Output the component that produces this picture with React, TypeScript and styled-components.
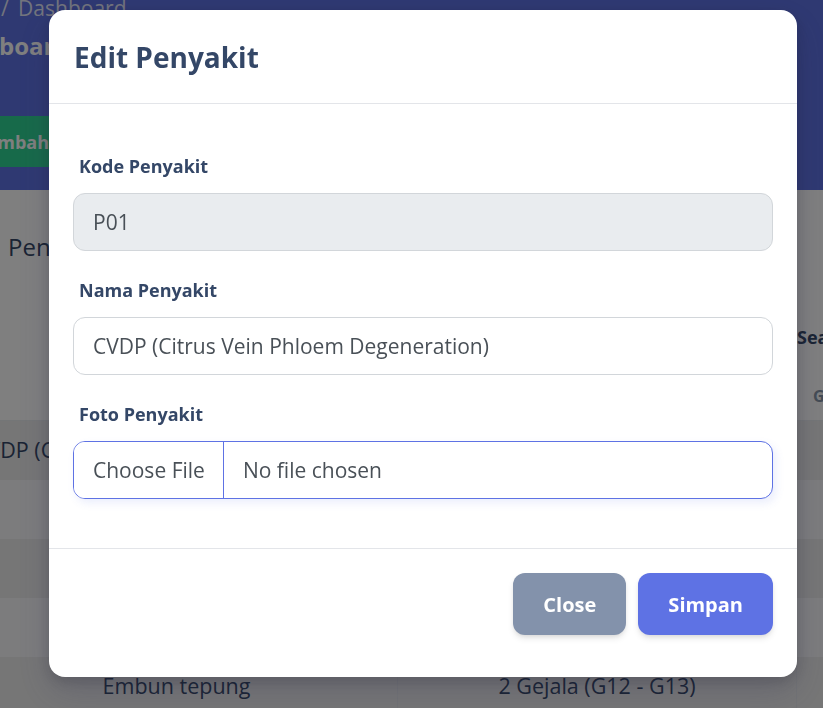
import React from "react";
import styled, { createGlobalStyle } from "styled-components";

const GlobalStyle = createGlobalStyle`
  html, body { margin: 0; padding: 0; }
  body {
    width: 823px;
    height: 708px;
    overflow: hidden;
    font-family: "Open Sans", "Noto Sans", sans-serif;
    background: #f8f9fe;
  }
  * { box-sizing: border-box; }
`;

/* ---------- background dashboard ---------- */

const Page = styled.div`
  width: 823px;
  height: 708px;
  overflow: hidden;
  background: #ffffff;
`;

const Header = styled.header`
  height: 190px;
  background: #5e72e4;
  display: flex;
  flex-direction: column;
  align-items: flex-start;
`;

const Breadcrumb = styled.div`
  margin: -6px 0 0 -66px;
  font-size: 21px;
  line-height: 28px;
  color: rgba(255, 255, 255, 0.85);
  white-space: nowrap;
  word-spacing: 4px;
`;

const PageTitle = styled.h1`
  margin: 8px 0 0 -61px;
  font-size: 24px;
  line-height: 32px;
  font-weight: 700;
  color: #ffffff;
  white-space: nowrap;
`;

const AddButton = styled.button`
  margin: 54px 0 0 -44px;
  height: 51px;
  padding: 0 20px;
  border: none;
  border-radius: 8px;
  background: #2fd494;
  color: #ffffff;
  font-family: inherit;
  font-size: 18px;
  font-weight: 700;
  white-space: nowrap;
`;

const Content = styled.section`
  padding-top: 42px;
`;

const CardTitle = styled.h3`
  margin: 0 0 0 8px;
  font-size: 24px;
  line-height: 30px;
  font-weight: 400;
  color: #344767;
`;

const SearchRow = styled.div`
  margin-top: 62px;
  padding-left: 797px;
  font-size: 18px;
  line-height: 26px;
  font-weight: 700;
  color: #344767;
  white-space: nowrap;
`;

const Table = styled.div`
  margin-top: 22px;
  margin-left: -44px;
  display: grid;
  grid-template-columns: 442px 399px 300px;
`;

const HeadCell = styled.div<{ $align?: string }>`
  height: 49px;
  display: flex;
  align-items: center;
  justify-content: ${(p) => p.$align || "center"};
  padding-left: 16px;
  font-size: 16px;
  font-weight: 700;
  color: #8898aa;
  border-bottom: 1px solid #e9ecef;
`;

const Cell = styled.div<{ $striped: boolean }>`
  height: 59px;
  display: flex;
  align-items: center;
  justify-content: center;
  padding-bottom: 2px;
  font-size: 21.5px;
  color: #344767;
  white-space: nowrap;
  background: ${(p) => (p.$striped ? "#ececec" : "#f8f9fa")};
  border-right: 1px solid #e4e6ea;
`;

/* ---------- modal ---------- */

const Overlay = styled.div`
  position: fixed;
  inset: 0;
  background: rgba(0, 0, 0, 0.5);
  display: flex;
  align-items: flex-start;
  padding: 10px 0 0 49px;
`;

const Modal = styled.div`
  width: 748px;
  background: #ffffff;
  border-radius: 16px;
  box-shadow: 0 15px 35px rgba(50, 50, 93, 0.2), 0 5px 15px rgba(0, 0, 0, 0.17);
  display: flex;
  flex-direction: column;
`;

const ModalHeader = styled.div`
  height: 94px;
  padding: 0 25px;
  display: flex;
  align-items: center;
  border-bottom: 1px solid #e3e5e9;
`;

const ModalTitle = styled.h5`
  margin: 0;
  font-size: 28px;
  line-height: 36px;
  font-weight: 700;
  color: #344767;
`;

const ModalBody = styled.div`
  padding: 50px 24px 49px;
  display: flex;
  flex-direction: column;
  gap: 27px;
`;

const FormGroup = styled.div`
  display: flex;
  flex-direction: column;
`;

const Label = styled.label`
  margin: 0 0 15px 6px;
  font-size: 18px;
  line-height: 24px;
  font-weight: 700;
  color: #344767;
`;

const TextInput = styled.input<{ $disabled?: boolean }>`
  height: 58px;
  width: 100%;
  padding: 0 19px;
  border: 1px solid #d2d6da;
  border-radius: 12px;
  background: ${(p) => (p.$disabled ? "#e9ecef" : "#ffffff")};
  font-family: inherit;
  font-size: 21px;
  color: #495057;
  outline: none;
`;

const FileInput = styled.input`
  height: 58px;
  width: 100%;
  padding: 0;
  border: 1px solid #5e72e4;
  border-radius: 12px;
  background: #ffffff;
  font-family: inherit;
  font-size: 21px;
  line-height: 56px;
  color: #495057;
  outline: none;
  overflow: hidden;
  box-shadow: 3px 4px 8px rgba(94, 114, 228, 0.12);

  &::file-selector-button {
    height: 56px;
    margin: 0 19px 0 0;
    padding: 0 18px 0 19px;
    border: none;
    border-right: 1px solid #5e72e4;
    background: #ffffff;
    font-family: inherit;
    font-size: 21px;
    color: #495057;
  }
`;

const ModalFooter = styled.div`
  border-top: 1px solid #e3e5e9;
  padding: 24px 24px 42px;
  display: flex;
  justify-content: flex-end;
  gap: 12px;
`;

const Button = styled.button<{ $variant: "secondary" | "primary" }>`
  height: 62px;
  padding: 0 30px;
  border: none;
  border-radius: 12px;
  background: ${(p) => (p.$variant === "primary" ? "#5e72e4" : "#8392ab")};
  color: #ffffff;
  font-family: inherit;
  font-size: 20px;
  font-weight: 700;
  box-shadow: 0 4px 7px -1px rgba(0, 0, 0, 0.11), 0 2px 4px -1px rgba(0, 0, 0, 0.07);
  cursor: pointer;
`;

const rows = [
  ["CVDP (Citrus Vein Phloem Degeneration)", "4 Gejala (G01 - G04)"],
  ["Kudis", "3 Gejala (G05 - G07)"],
  ["Blendok", "2 Gejala (G08 - G09)"],
  ["Busuk Buah", "2 Gejala (G10 - G11)"],
  ["Embun tepung", "2 Gejala (G12 - G13)"],
];

export default function App() {
  return (
    <>
      <GlobalStyle />
      <Page>
        <Header>
          <Breadcrumb>Pages / Dashboard</Breadcrumb>
          <PageTitle>Dashboard</PageTitle>
          <AddButton>Tambah Penyakit</AddButton>
        </Header>
        <Content>
          <CardTitle>Penyakit</CardTitle>
          <SearchRow>Search:</SearchRow>
          <Table>
            <HeadCell>NAMA PENYAKIT</HeadCell>
            <HeadCell>GEJALA</HeadCell>
            <HeadCell $align="flex-start">Gambar</HeadCell>
            {rows.map(([name, gejala], i) => (
              <React.Fragment key={name}>
                <Cell $striped={i % 2 === 0}>{name}</Cell>
                <Cell $striped={i % 2 === 0}>{gejala}</Cell>
                <Cell $striped={i % 2 === 0} />
              </React.Fragment>
            ))}
          </Table>
        </Content>
      </Page>

      <Overlay>
        <Modal>
          <ModalHeader>
            <ModalTitle>Edit Penyakit</ModalTitle>
          </ModalHeader>
          <ModalBody>
            <FormGroup>
              <Label htmlFor="kode">Kode Penyakit</Label>
              <TextInput id="kode" $disabled disabled defaultValue="P01" />
            </FormGroup>
            <FormGroup>
              <Label htmlFor="nama">Nama Penyakit</Label>
              <TextInput id="nama" defaultValue="CVDP (Citrus Vein Phloem Degeneration)" />
            </FormGroup>
            <FormGroup>
              <Label htmlFor="foto">Foto Penyakit</Label>
              <FileInput id="foto" type="file" />
            </FormGroup>
          </ModalBody>
          <ModalFooter>
            <Button $variant="secondary">Close</Button>
            <Button $variant="primary">Simpan</Button>
          </ModalFooter>
        </Modal>
      </Overlay>
    </>
  );
}
